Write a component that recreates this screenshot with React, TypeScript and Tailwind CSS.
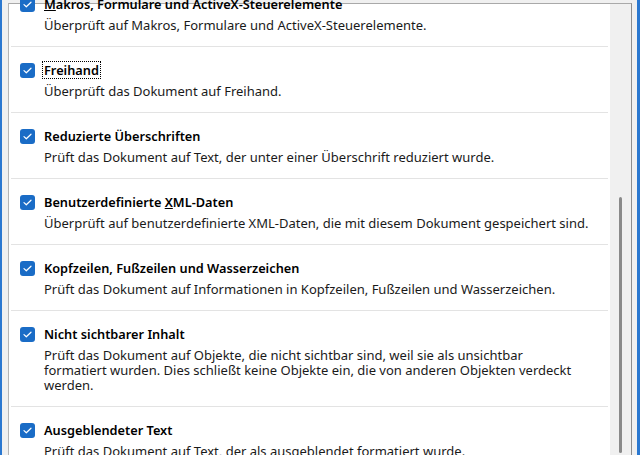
import type { ReactNode } from "react";

type Check = {
  title: ReactNode,
  desc: string[],
  focused?: boolean
}

const checks: Check[] = [
  {
    title: <><u>M</u>akros, Formulare und ActiveX-Steuerelemente</>,
    desc: ["Überprüft auf Makros, Formulare und ActiveX-Steuerelemente."],
  },
  {
    title: "Freihand",
    desc: ["Überprüft das Dokument auf Freihand."],
    focused: true,
  },
  {
    title: "Reduzierte Überschriften",
    desc: ["Prüft das Dokument auf Text, der unter einer Überschrift reduziert wurde."],
  },
  {
    title: <>Benutzerdefinierte <u>X</u>ML-Daten</>,
    desc: ["Überprüft auf benutzerdefinierte XML-Daten, die mit diesem Dokument gespeichert sind."],
  },
  {
    title: "Kopfzeilen, Fußzeilen und Wasserzeichen",
    desc: ["Prüft das Dokument auf Informationen in Kopfzeilen, Fußzeilen und Wasserzeichen."],
  },
  {
    title: "Nicht sichtbarer Inhalt",
    desc: [
      "Prüft das Dokument auf Objekte, die nicht sichtbar sind, weil sie als unsichtbar",
      "formatiert wurden. Dies schließt keine Objekte ein, die von anderen Objekten verdeckt",
      "werden.",
    ],
  },
  {
    title: "Ausgeblendeter Text",
    desc: ["Prüft das Dokument auf Text, der als ausgeblendet formatiert wurde."],
  },
];

function CheckBox() {
  return (
    <div className="w-[15px] h-[15px] rounded-[3px] bg-[#1a6cc6] flex items-center justify-center shrink-0">
      <svg width="9" height="7" viewBox="0 0 9 7" fill="none">
        <path d="M1 3.6 L3.3 5.8 L8 1.2" stroke="white" strokeWidth="1.2" strokeLinecap="round" strokeLinejoin="round" />
      </svg>
    </div>
  );
}

function CheckRow({ check, first }: { check: Check, first: boolean }) {
  return (
    <div className={`${first ? "" : "border-t border-[#e3e3e3]"} mx-[2px] pl-[9px] pt-[14px] pb-[13px]`}>
      <div className="flex items-center gap-[7px] h-[18px]">
        <CheckBox />
        <span className={`px-[1px] leading-[16px] border border-dotted ${check.focused ? "border-black" : "border-transparent"} font-semibold text-[12.75px] text-black`}>
          {check.title}
        </span>
      </div>
      <div className="mt-[5px] pl-[24px] text-[13px] leading-[15px] text-[#1a1a1a]">
        {check.desc.map((line) => (
          <div key={line} className="whitespace-nowrap">{line}</div>
        ))}
      </div>
    </div>
  );
}

export default function App() {
  return (
    <div className="w-[640px] h-[455px] overflow-hidden bg-[#f0f0f0] flex font-['Noto_Sans',sans-serif]">
      <div className="w-[2px] bg-[#2b78d0]" />

      <div className="flex-1 pl-[6px] pr-[5px] pt-[3px]">
        <div className="h-full bg-white border-t border-l border-r border-t-[#a9a9a9] border-l-[#b4b4b4] border-r-[#8d8d8d] flex">
          <div className="flex-1 -mt-[23px]">
            {checks.map((check, i) => (
              <CheckRow key={i} check={check} first={i === 0} />
            ))}
          </div>

          {/* collapsed overlay scrollbar */}
          <div className="w-[21px] bg-[#f0f0f0] pt-[193px] flex justify-center">
            <div className="w-[3px] h-[256px] rounded-full bg-[#8a8a8a]" />
          </div>
        </div>
      </div>

      <div className="w-[3px] bg-[#2b78d0]" />
    </div>
  );
}
